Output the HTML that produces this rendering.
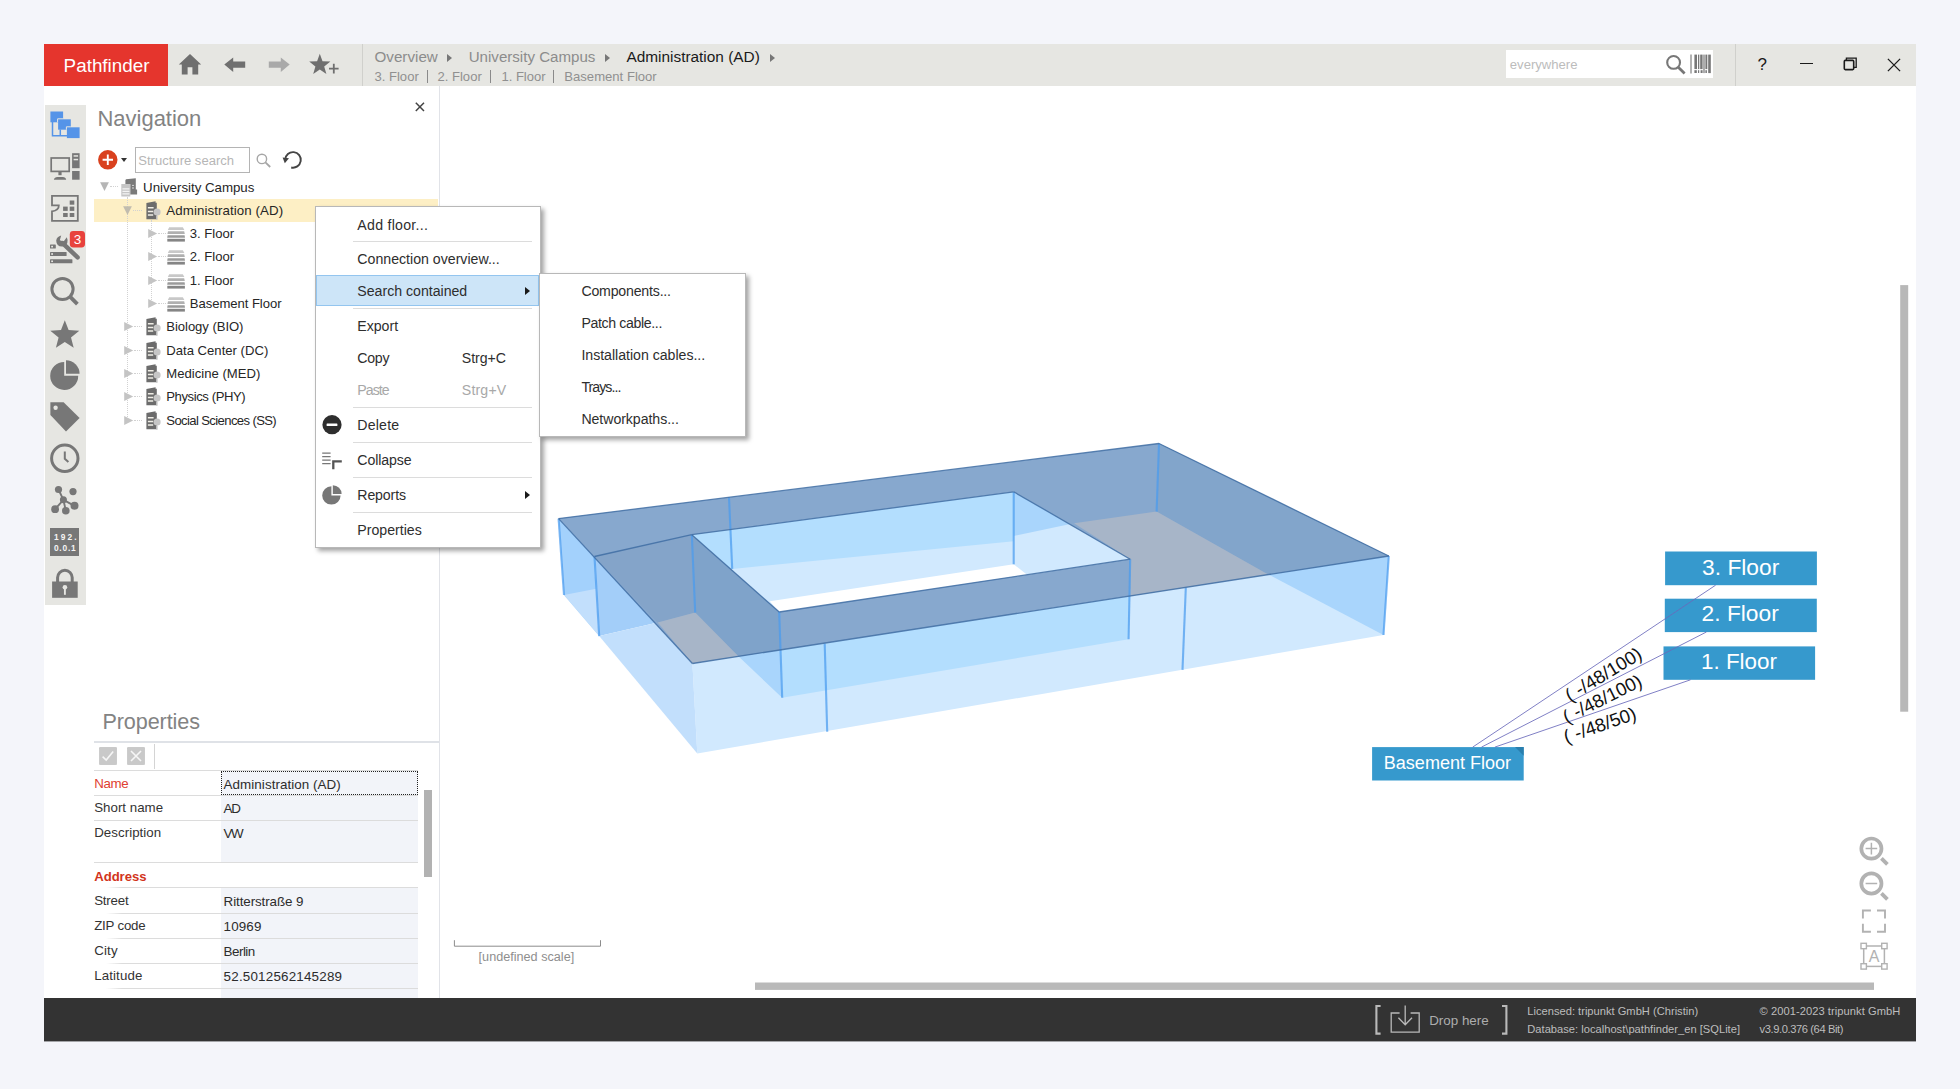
<!DOCTYPE html>
<html>
<head>
<meta charset="utf-8">
<title>Pathfinder</title>
<style>
*{box-sizing:border-box;margin:0;padding:0}
html,body{width:1960px;height:1089px;overflow:hidden;background:#f4f5fa;font-family:"Liberation Sans",sans-serif;}
.abs{position:absolute}
#win{position:absolute;left:44px;top:44px;width:1872px;height:998px;background:#fff;overflow:hidden}
.t{position:absolute;white-space:nowrap;line-height:1}
</style>
</head>
<body>
<div id="win">
<!-- title -->
<div class="abs" style="left:0.0px;top:0.0px;width:1872.0px;height:41.7px;background:#e6e6e2;"></div>
<div class="abs" style="left:0.0px;top:0.0px;width:124.2px;height:41.7px;background:#e5352d;"></div>
<div class="t" style="left:19.6px;top:13px;font-size:18.85px;color:#fff;">Pathfinder</div>
<div class="abs" style="left:318.0px;top:0.0px;width:1.0px;height:41.7px;background:#d0d0cc;"></div>
<div class="abs" style="left:1691.0px;top:0.0px;width:1.0px;height:41.7px;background:#d0d0cc;"></div>
<svg class="abs" style="left:134.0px;top:9.0px" width="24" height="23" viewBox="0 0 24 23"><path d="M12 1 L0.8 11.6 L3.8 11.6 L3.8 21.6 L9.6 21.6 L9.6 14.2 L14.4 14.2 L14.4 21.6 L20.2 21.6 L20.2 11.6 L23.2 11.6 Z" fill="#6f6f6f"/></svg>
<svg class="abs" style="left:180.0px;top:13.0px" width="22" height="16" viewBox="0 0 22 16"><path d="M0.3 7.6 L9.2 0.4 L9.2 4.6 L21.2 4.6 L21.2 10.8 L9.2 10.8 L9.2 15 Z" fill="#6f6f6f"/></svg>
<svg class="abs" style="left:224.0px;top:13.0px" width="22" height="16" viewBox="0 0 22 16"><path d="M21.7 7.6 L12.8 0.4 L12.8 4.6 L0.8 4.6 L0.8 10.8 L12.8 10.8 L12.8 15 Z" fill="#a9a9a9"/></svg>
<svg class="abs" style="left:265.0px;top:9.0px" width="32" height="23" viewBox="0 0 32 23"><path d="M10.8 0.8 L13.5 8.2 L21.4 8.5 L15.2 13.4 L17.4 21 L10.8 16.6 L4.2 21 L6.4 13.4 L0.2 8.5 L8.1 8.2 Z" fill="#6f6f6f"/><path d="M20 15.6 H29.6 M24.8 10.8 V20.4" stroke="#6f6f6f" stroke-width="1.8" fill="none"/></svg>
<div class="t" style="left:330.5px;top:5px;font-size:15.2px;color:#8c8c8c;">Overview</div>
<div class="abs" style="left:403px;top:9.8px;border-left:5.5px solid #777;border-top:4.5px solid transparent;border-bottom:4.5px solid transparent"></div>
<div class="t" style="left:424.7px;top:5px;font-size:15.1px;color:#8c8c8c;">University Campus</div>
<div class="abs" style="left:560.6px;top:9.8px;border-left:5.5px solid #777;border-top:4.5px solid transparent;border-bottom:4.5px solid transparent"></div>
<div class="t" style="left:582.4px;top:5px;font-size:15.4px;color:#1a1a1a;">Administration (AD)</div>
<div class="abs" style="left:725.6px;top:9.8px;border-left:5.5px solid #777;border-top:4.5px solid transparent;border-bottom:4.5px solid transparent"></div>
<div class="t" style="left:330.5px;top:26px;font-size:13.05px;color:#909090;">3. Floor</div>
<div class="abs" style="left:382.7px;top:25.6px;width:1.0px;height:13.0px;background:#8a8a8a;"></div>
<div class="t" style="left:393.5px;top:26px;font-size:13.05px;color:#909090;">2. Floor</div>
<div class="abs" style="left:446.3px;top:25.6px;width:1.0px;height:13.0px;background:#8a8a8a;"></div>
<div class="t" style="left:457.4px;top:26px;font-size:13.05px;color:#909090;">1. Floor</div>
<div class="abs" style="left:509.3px;top:25.6px;width:1.0px;height:13.0px;background:#8a8a8a;"></div>
<div class="t" style="left:520.3px;top:26px;font-size:13.1px;color:#909090;">Basement Floor</div>
<div class="abs" style="left:1461.6px;top:6.0px;width:207.4px;height:28.2px;background:#fff;"></div>
<div class="t" style="left:1465.8px;top:14px;font-size:13.1px;color:#bcbcbc;">everywhere</div>
<svg class="abs" style="left:1621.0px;top:10.0px" width="22" height="21" viewBox="0 0 22 21"><circle cx="8.6" cy="8.4" r="6.4" fill="none" stroke="#777" stroke-width="2.1"/><path d="M13.3 13.3 L19.6 19.4" stroke="#777" stroke-width="2.8" fill="none"/></svg>
<svg class="abs" style="left:1646.0px;top:9.5px" width="23" height="20" viewBox="0 0 23 20"><path d="M1 0.5V19.5" stroke="#555" stroke-width="0.9"/><g fill="#777"><rect x="4.4" y="0.6" width="2.6" height="14.5"/><rect x="8" y="0.6" width="1.3" height="14.5"/><rect x="10.2" y="0.6" width="2.4" height="14.5"/><rect x="13.4" y="0.6" width="1.2" height="18.5"/><rect x="15.4" y="0.6" width="1.9" height="14.5"/><rect x="18.2" y="0.6" width="2.6" height="18.5"/><rect x="4.4" y="16.2" width="2.4" height="2.8"/><rect x="8" y="16.2" width="1.2" height="2.8"/><rect x="10.6" y="16.2" width="2" height="2.8"/><rect x="15.4" y="16.2" width="1.5" height="2.8"/></g></svg>
<div class="t" style="left:1713.5px;top:12px;font-size:17.0px;color:#1a1a1a;">?</div>
<div class="abs" style="left:1755.8px;top:19.0px;width:13.5px;height:1.2px;background:#1a1a1a;"></div>
<svg class="abs" style="left:1799.0px;top:13.0px" width="15" height="14" viewBox="0 0 15 14"><path d="M3.4 3.2 V1.2 H13.2 V10.4 H11" fill="none" stroke="#1a1a1a" stroke-width="1.3"/><rect x="1.3" y="3.4" width="9.4" height="9.2" rx="1" fill="none" stroke="#1a1a1a" stroke-width="1.6"/></svg>
<svg class="abs" style="left:1843.0px;top:13.5px" width="14" height="14" viewBox="0 0 14 14"><path d="M0.9 0.9 L13.1 13.1 M13.1 0.9 L0.9 13.1" stroke="#1a1a1a" stroke-width="1.3" fill="none"/></svg>
<!-- strip -->
<div class="abs" style="left:0.6px;top:60.6px;width:41.2px;height:500.0px;background:#e6e6e2;"></div>
<svg class="abs" style="left:6.0px;top:67.0px" width="30" height="28" viewBox="0 0 30 28"><g fill="#5594e8"><rect x="0.4" y="0.5" width="12.7" height="10.8"/><path d="M8.1 8.3 H20.8 V18.7 H8.1 Z"/><rect x="16.9" y="16.3" width="12.7" height="10.8"/></g><path d="M2.5 11 V24.8 H17 M10.3 18.5 V24.8" fill="none" stroke="#5594e8" stroke-width="1.5"/><path d="M7.6 11.3 V7.8 H13.1" fill="none" stroke="#e6e6e2" stroke-width="1"/><path d="M16.4 18.7 V15.8 H20.8" fill="none" stroke="#e6e6e2" stroke-width="1"/></svg>
<svg class="abs" style="left:6.0px;top:109.0px" width="30" height="27" viewBox="0 0 30 27"><rect x="1.2" y="5" width="18" height="13.4" fill="none" stroke="#777" stroke-width="1.7"/><rect x="8.4" y="19" width="3.2" height="3.2" fill="#777"/><path d="M3.8 26.7 Q4.6 23.9 7.4 23.9 H12.8 Q15.6 23.9 16.2 26.7 Z" fill="#777"/><rect x="22.1" y="0.2" width="7.5" height="15" fill="#777"/><rect x="23.6" y="2.2" width="4.5" height="1.5" fill="#e6e6e2"/><rect x="23.6" y="5.8" width="4.5" height="1.5" fill="#e6e6e2"/><rect x="22.1" y="18" width="7.5" height="8.7" fill="#777"/></svg>
<svg class="abs" style="left:6.0px;top:150.0px" width="30" height="29" viewBox="0 0 30 29"><path d="M2 11.4 V1.9 H27.8 V26.8 H2 V17.4 Q9 16.4 8.8 11.4 Z" fill="none" stroke="#777" stroke-width="1.8"/><g fill="#777"><rect x="19.7" y="6.5" width="4.6" height="4.2"/><rect x="13.1" y="12.6" width="4.6" height="4.3"/><rect x="19.7" y="12.6" width="4.6" height="4.3"/><rect x="13.1" y="19" width="4.6" height="4"/><rect x="19.7" y="19" width="4.6" height="4"/></g></svg>
<svg class="abs" style="left:5.0px;top:186.0px" width="38" height="35" viewBox="0 0 38 35"><g fill="#777"><rect x="1" y="14.4" width="5.8" height="4.2" rx="0.6"/><rect x="1" y="22" width="16.6" height="4.1" rx="0.6"/><rect x="1" y="29.2" width="22.4" height="4.1" rx="0.6"/></g><g fill="#e6e6e2"><rect x="2.2" y="15.8" width="1.8" height="1.6"/><rect x="2.2" y="23.2" width="1.8" height="1.6"/><rect x="2.2" y="30.5" width="1.8" height="1.6"/></g><path d="M13.6 13.2 L28.6 27.4" stroke="#777" stroke-width="4.4" stroke-linecap="round"/><path d="M7.2 10.4 Q7.4 16.6 13.4 16.4 Q18.8 15.8 18.6 10 L17.8 7.2 L14.6 11.6 L10.8 10.2 L12.2 5.6 Q8 6.6 7.2 10.4 Z" fill="#777"/><rect x="20.8" y="1" width="15.2" height="16.4" rx="3.4" fill="#e8423d"/><text x="28.4" y="14" font-family="Liberation Sans" font-size="13.5" fill="#fff" text-anchor="middle">3</text></svg>
<svg class="abs" style="left:6.0px;top:232.0px" width="30" height="30" viewBox="0 0 30 30"><circle cx="12.5" cy="13" r="10.6" fill="none" stroke="#777" stroke-width="3"/><path d="M20 20.6 L27.4 28.2" stroke="#777" stroke-width="3.8" stroke-linecap="butt"/></svg>
<svg class="abs" style="left:6.0px;top:276.0px" width="30" height="28" viewBox="0 0 30 28"><polygon points="14.8,0.2 18.6,10.1 29.3,10.7 21.0,17.4 23.7,27.7 14.8,21.9 5.9,27.7 8.6,17.4 0.3,10.7 11.0,10.1" fill="#777"/></svg>
<svg class="abs" style="left:5.0px;top:316.0px" width="32" height="31" viewBox="0 0 32 31"><path d="M15.2 15.7 V1.9 A14 14 0 1 0 29.2 15.7 Z" fill="#777"/><path d="M17 13.8 V0.3 A13.6 13.6 0 0 1 30.6 13.8 Z" fill="#777"/></svg>
<svg class="abs" style="left:6.0px;top:357.0px" width="31" height="32" viewBox="0 0 31 32"><path d="M0.4 1.3 H13.6 L29.6 17.1 L16 30.5 L0.4 14 Z" fill="#777"/><circle cx="5.6" cy="6.8" r="2.2" fill="#e6e6e2"/></svg>
<svg class="abs" style="left:5.0px;top:399.0px" width="32" height="32" viewBox="0 0 32 32"><circle cx="15.8" cy="15.3" r="13.2" fill="none" stroke="#777" stroke-width="3"/><path d="M15.8 8.4 V15.8 L19.4 19" fill="none" stroke="#777" stroke-width="2"/></svg>
<svg class="abs" style="left:6.0px;top:441.0px" width="30" height="30" viewBox="0 0 30 30"><g stroke="#777" stroke-width="1.9"><path d="M13.4 14.8 L8.5 4.5 M13.4 14.8 L24.5 20.8 M13.4 14.8 L15.8 25.7 M13.4 14.8 L5.1 24.2"/></g><g fill="#777"><circle cx="13.4" cy="14.8" r="3.5"/><circle cx="8.5" cy="4.5" r="3.6"/><circle cx="23" cy="6.6" r="3.6"/><circle cx="24.5" cy="20.8" r="4"/><circle cx="15.8" cy="25.7" r="3.8"/><circle cx="5.1" cy="24.2" r="3.9"/></g></svg>
<div class="abs" style="left:6.3px;top:483.6px;width:29.2px;height:28.8px;background:#777;"></div>
<div class="t" style="left:9.9px;top:489px;font-size:8.4px;color:#f4f4f4;font-weight:bold;letter-spacing:2.1px">192.</div>
<div class="t" style="left:9.9px;top:500px;font-size:8.4px;color:#f4f4f4;font-weight:bold;letter-spacing:0.8px">0.0.1</div>
<svg class="abs" style="left:6.0px;top:523.0px" width="30" height="32" viewBox="0 0 30 32"><path d="M7.6 15 V10.6 A7.3 7.3 0 0 1 22.2 10.6 V15" fill="none" stroke="#777" stroke-width="3"/><rect x="2.1" y="14.5" width="25.6" height="16.3" fill="#777"/><circle cx="14.9" cy="20.3" r="2.3" fill="#e6e6e2"/><path d="M14.9 21 V27.8" stroke="#e6e6e2" stroke-width="1.9"/></svg>
<!-- nav -->
<div class="abs" style="left:395.0px;top:41.7px;width:1.0px;height:912.5px;background:#e1e3e8;"></div>
<div class="t" style="left:53.4px;top:64px;font-size:22.0px;color:#838383;">Navigation</div>
<svg class="abs" style="left:371.0px;top:57.5px" width="10" height="10" viewBox="0 0 10 10"><path d="M0.8 0.8 L9 9 M9 0.8 L0.8 9" stroke="#444" stroke-width="1.5"/></svg>
<svg class="abs" style="left:54.0px;top:106.0px" width="20" height="20" viewBox="0 0 20 20"><circle cx="9.8" cy="9.8" r="9.7" fill="#d9411e"/><path d="M4.6 9.8 H15 M9.8 4.6 V15" stroke="#fff" stroke-width="1.9"/></svg>
<div class="abs" style="left:77.4px;top:113.80000000000001px;border-top:4.2px solid #333;border-left:3.5px solid transparent;border-right:3.5px solid transparent"></div>
<div class="abs" style="left:91.2px;top:103.3px;width:114.8px;height:25.3px;background:#fff;border:1px solid #b4b4b4"></div>
<div class="t" style="left:94.3px;top:110px;font-size:13.05px;color:#b6b6b6;">Structure search</div>
<svg class="abs" style="left:212.0px;top:108.5px" width="16" height="15" viewBox="0 0 16 15"><circle cx="5.9" cy="5.9" r="4.7" fill="none" stroke="#a6a6a6" stroke-width="1.4"/><path d="M9.4 9.4 L14.2 14" stroke="#a6a6a6" stroke-width="1.8"/></svg>
<svg class="abs" style="left:238.0px;top:106.0px" width="21" height="20" viewBox="0 0 21 20"><path d="M3.2 9.6 A7.8 7.8 0 1 1 9.2 17.5" fill="none" stroke="#444" stroke-width="1.9"/><path d="M0.6 7.4 L7 8.2 L2.8 13.2 Z" fill="#444"/></svg>
<div class="abs" style="left:50.2px;top:154.8px;width:344.1px;height:22.9px;background:#fdefc5;"></div>
<div class="abs" style="left:83.2px;top:153px;width:0;height:224px;border-left:1px dotted #d2d2d2"></div>
<div class="abs" style="left:107px;top:176px;width:0;height:84px;border-left:1px dotted #d2d2d2"></div>
<svg class="abs" style="left:55.9px;top:138.3px" width="10" height="10" viewBox="0 0 10 10"><polygon points="0.1,0.2 8.9,0.2 4.5,8.9" fill="#b6b6b6"/></svg>
<div class="abs" style="left:65.5px;top:142.4px;width:8px;height:0;border-top:1px dotted #d2d2d2"></div>
<svg class="abs" style="left:77.0px;top:134.0px" width="17" height="19" viewBox="0 0 17 19"><path d="M4.4 2.2 L5 1.2 L14.8 0.2 V11.4 H16.1 V16.6 H9.2 V6 H4.4 Z" fill="#7a7a7a"/><path d="M11 7.4H13M11 10H13" stroke="#d8d8d8" stroke-width="1"/><rect x="0.3" y="6" width="9" height="12.5" fill="#c6c6c6"/><path d="M1.4 10.9H8.4M1.4 13.4H8.4M1.4 15.9H8.4" stroke="#f4f4f4" stroke-width="1.4"/></svg>
<div class="t" style="left:99.1px;top:137px;font-size:13.3px;color:#262626;letter-spacing:-0.019px;">University Campus</div>
<svg class="abs" style="left:79.2px;top:161.7px" width="10" height="10" viewBox="0 0 10 10"><polygon points="0.1,0.2 8.9,0.2 4.5,8.9" fill="#c1bcae"/></svg>
<div class="abs" style="left:89.0px;top:165.6px;width:9px;height:0;border-top:1px dotted #d2d2d2"></div>
<svg class="abs" style="left:101.6px;top:157.0px" width="16" height="19" viewBox="0 0 16 19"><path d="M0.4 2 L9.6 0.3 V1.7 H10.8 V18.3 H0.4 Z" fill="#6c6c6c"/><path d="M1.9 6.65H7.6M1.9 10.4H7.2M1.9 14.05H7.2" stroke="#f0eee6" stroke-width="1.5"/><circle cx="11.1" cy="11" r="3.55" fill="#c6c6c6"/><path d="M10.9 14.4V18.7" stroke="#c6c6c6" stroke-width="1.5"/></svg>
<div class="t" style="left:122.3px;top:160px;font-size:13.3px;color:#262626;letter-spacing:0.083px;">Administration (AD)</div>
<svg class="abs" style="left:103.9px;top:184.8px" width="10" height="10" viewBox="0 0 10 10"><polygon points="0.2,0.1 9.2,4.5 0.2,8.9" fill="#c4c4c4"/></svg>
<div class="abs" style="left:113.6px;top:188.9px;width:8px;height:0;border-top:1px dotted #d2d2d2"></div>
<svg class="abs" style="left:122.9px;top:182.6px" width="19" height="15" viewBox="0 0 19 15"><path d="M2.2 0.3 H15.8 L17.4 3 H0.8 Z" fill="#c8c8c8"/><path d="M1 4.3 H17.2 L17.8 6.9 H0.4 Z" fill="#b0b0b0"/><path d="M0.6 8.2 H17.6 L18 10.7 H0.2 Z" fill="#9a9a9a"/><path d="M0.3 11.8 H17.9 V14.6 H0.3 Z" fill="#858585"/></svg>
<div class="t" style="left:145.8px;top:183px;font-size:13.1px;color:#262626;letter-spacing:-0.016px;">3. Floor</div>
<svg class="abs" style="left:103.9px;top:207.8px" width="10" height="10" viewBox="0 0 10 10"><polygon points="0.2,0.1 9.2,4.5 0.2,8.9" fill="#c4c4c4"/></svg>
<div class="abs" style="left:113.6px;top:211.9px;width:8px;height:0;border-top:1px dotted #d2d2d2"></div>
<svg class="abs" style="left:122.9px;top:205.6px" width="19" height="15" viewBox="0 0 19 15"><path d="M2.2 0.3 H15.8 L17.4 3 H0.8 Z" fill="#c8c8c8"/><path d="M1 4.3 H17.2 L17.8 6.9 H0.4 Z" fill="#b0b0b0"/><path d="M0.6 8.2 H17.6 L18 10.7 H0.2 Z" fill="#9a9a9a"/><path d="M0.3 11.8 H17.9 V14.6 H0.3 Z" fill="#858585"/></svg>
<div class="t" style="left:145.8px;top:206px;font-size:13.1px;color:#262626;letter-spacing:-0.016px;">2. Floor</div>
<svg class="abs" style="left:103.9px;top:231.8px" width="10" height="10" viewBox="0 0 10 10"><polygon points="0.2,0.1 9.2,4.5 0.2,8.9" fill="#c4c4c4"/></svg>
<div class="abs" style="left:113.6px;top:235.9px;width:8px;height:0;border-top:1px dotted #d2d2d2"></div>
<svg class="abs" style="left:122.9px;top:229.6px" width="19" height="15" viewBox="0 0 19 15"><path d="M2.2 0.3 H15.8 L17.4 3 H0.8 Z" fill="#c8c8c8"/><path d="M1 4.3 H17.2 L17.8 6.9 H0.4 Z" fill="#b0b0b0"/><path d="M0.6 8.2 H17.6 L18 10.7 H0.2 Z" fill="#9a9a9a"/><path d="M0.3 11.8 H17.9 V14.6 H0.3 Z" fill="#858585"/></svg>
<div class="t" style="left:145.8px;top:230px;font-size:13.1px;color:#262626;letter-spacing:-0.059px;">1. Floor</div>
<svg class="abs" style="left:103.9px;top:254.8px" width="10" height="10" viewBox="0 0 10 10"><polygon points="0.2,0.1 9.2,4.5 0.2,8.9" fill="#c4c4c4"/></svg>
<div class="abs" style="left:113.6px;top:258.9px;width:8px;height:0;border-top:1px dotted #d2d2d2"></div>
<svg class="abs" style="left:122.9px;top:252.6px" width="19" height="15" viewBox="0 0 19 15"><path d="M2.2 0.3 H15.8 L17.4 3 H0.8 Z" fill="#c8c8c8"/><path d="M1 4.3 H17.2 L17.8 6.9 H0.4 Z" fill="#b0b0b0"/><path d="M0.6 8.2 H17.6 L18 10.7 H0.2 Z" fill="#9a9a9a"/><path d="M0.3 11.8 H17.9 V14.6 H0.3 Z" fill="#858585"/></svg>
<div class="t" style="left:145.8px;top:253px;font-size:13.1px;color:#262626;letter-spacing:-0.052px;">Basement Floor</div>
<svg class="abs" style="left:80.3px;top:277.8px" width="10" height="10" viewBox="0 0 10 10"><polygon points="0.2,0.1 9.2,4.5 0.2,8.9" fill="#c4c4c4"/></svg>
<div class="abs" style="left:90.0px;top:281.9px;width:8px;height:0;border-top:1px dotted #d2d2d2"></div>
<svg class="abs" style="left:101.6px;top:273.0px" width="16" height="19" viewBox="0 0 16 19"><path d="M0.4 2 L9.6 0.3 V1.7 H10.8 V18.3 H0.4 Z" fill="#6c6c6c"/><path d="M1.9 6.65H7.6M1.9 10.4H7.2M1.9 14.05H7.2" stroke="#f0eee6" stroke-width="1.5"/><circle cx="11.1" cy="11" r="3.55" fill="#c6c6c6"/><path d="M10.9 14.4V18.7" stroke="#c6c6c6" stroke-width="1.5"/></svg>
<div class="t" style="left:122.3px;top:276px;font-size:13.1px;color:#262626;letter-spacing:-0.058px;">Biology (BIO)</div>
<svg class="abs" style="left:80.3px;top:301.8px" width="10" height="10" viewBox="0 0 10 10"><polygon points="0.2,0.1 9.2,4.5 0.2,8.9" fill="#c4c4c4"/></svg>
<div class="abs" style="left:90.0px;top:305.9px;width:8px;height:0;border-top:1px dotted #d2d2d2"></div>
<svg class="abs" style="left:101.6px;top:297.0px" width="16" height="19" viewBox="0 0 16 19"><path d="M0.4 2 L9.6 0.3 V1.7 H10.8 V18.3 H0.4 Z" fill="#6c6c6c"/><path d="M1.9 6.65H7.6M1.9 10.4H7.2M1.9 14.05H7.2" stroke="#f0eee6" stroke-width="1.5"/><circle cx="11.1" cy="11" r="3.55" fill="#c6c6c6"/><path d="M10.9 14.4V18.7" stroke="#c6c6c6" stroke-width="1.5"/></svg>
<div class="t" style="left:122.3px;top:300px;font-size:13.1px;color:#262626;letter-spacing:0.005px;">Data Center (DC)</div>
<svg class="abs" style="left:80.3px;top:324.8px" width="10" height="10" viewBox="0 0 10 10"><polygon points="0.2,0.1 9.2,4.5 0.2,8.9" fill="#c4c4c4"/></svg>
<div class="abs" style="left:90.0px;top:328.9px;width:8px;height:0;border-top:1px dotted #d2d2d2"></div>
<svg class="abs" style="left:101.6px;top:320.0px" width="16" height="19" viewBox="0 0 16 19"><path d="M0.4 2 L9.6 0.3 V1.7 H10.8 V18.3 H0.4 Z" fill="#6c6c6c"/><path d="M1.9 6.65H7.6M1.9 10.4H7.2M1.9 14.05H7.2" stroke="#f0eee6" stroke-width="1.5"/><circle cx="11.1" cy="11" r="3.55" fill="#c6c6c6"/><path d="M10.9 14.4V18.7" stroke="#c6c6c6" stroke-width="1.5"/></svg>
<div class="t" style="left:122.3px;top:323px;font-size:13.1px;color:#262626;letter-spacing:0.007px;">Medicine (MED)</div>
<svg class="abs" style="left:80.3px;top:347.8px" width="10" height="10" viewBox="0 0 10 10"><polygon points="0.2,0.1 9.2,4.5 0.2,8.9" fill="#c4c4c4"/></svg>
<div class="abs" style="left:90.0px;top:351.9px;width:8px;height:0;border-top:1px dotted #d2d2d2"></div>
<svg class="abs" style="left:101.6px;top:343.0px" width="16" height="19" viewBox="0 0 16 19"><path d="M0.4 2 L9.6 0.3 V1.7 H10.8 V18.3 H0.4 Z" fill="#6c6c6c"/><path d="M1.9 6.65H7.6M1.9 10.4H7.2M1.9 14.05H7.2" stroke="#f0eee6" stroke-width="1.5"/><circle cx="11.1" cy="11" r="3.55" fill="#c6c6c6"/><path d="M10.9 14.4V18.7" stroke="#c6c6c6" stroke-width="1.5"/></svg>
<div class="t" style="left:122.3px;top:346px;font-size:13.1px;color:#262626;letter-spacing:-0.420px;">Physics (PHY)</div>
<svg class="abs" style="left:80.3px;top:371.8px" width="10" height="10" viewBox="0 0 10 10"><polygon points="0.2,0.1 9.2,4.5 0.2,8.9" fill="#c4c4c4"/></svg>
<div class="abs" style="left:90.0px;top:375.9px;width:8px;height:0;border-top:1px dotted #d2d2d2"></div>
<svg class="abs" style="left:101.6px;top:367.0px" width="16" height="19" viewBox="0 0 16 19"><path d="M0.4 2 L9.6 0.3 V1.7 H10.8 V18.3 H0.4 Z" fill="#6c6c6c"/><path d="M1.9 6.65H7.6M1.9 10.4H7.2M1.9 14.05H7.2" stroke="#f0eee6" stroke-width="1.5"/><circle cx="11.1" cy="11" r="3.55" fill="#c6c6c6"/><path d="M10.9 14.4V18.7" stroke="#c6c6c6" stroke-width="1.5"/></svg>
<div class="t" style="left:122.3px;top:370px;font-size:13.1px;color:#262626;letter-spacing:-0.622px;">Social Sciences (SS)</div>
<!-- props -->
<div class="t" style="left:58.4px;top:667px;font-size:21.6px;color:#838383;letter-spacing:-0.094px;">Properties</div>
<div class="abs" style="left:50.0px;top:696.9px;width:345.0px;height:1.8px;background:#dfe2e7;"></div>
<svg class="abs" style="left:55.0px;top:703.4px" width="18" height="18" viewBox="0 0 18 18"><rect x="0.3" y="0.3" width="17.4" height="17.4" rx="1" fill="#c9c9c9" stroke="#bdbdbd" stroke-width="0.6"/><path d="M3.6 9.6 L7.2 13 L14.2 4.6" fill="none" stroke="#f6f6f6" stroke-width="1.6"/></svg>
<svg class="abs" style="left:83.2px;top:703.4px" width="18" height="18" viewBox="0 0 18 18"><rect x="0.3" y="0.3" width="17.4" height="17.4" rx="1" fill="#c9c9c9" stroke="#bdbdbd" stroke-width="0.6"/><path d="M4 4 L14 14 M14 4 L4 14" fill="none" stroke="#f6f6f6" stroke-width="1.6"/></svg>
<div class="abs" style="left:109.5px;top:700.0px;width:1.0px;height:24.5px;background:#d4d4d4;"></div>
<div class="abs" style="left:177.0px;top:727.0px;width:197.0px;height:91.8px;background:#f2f4f9;"></div>
<div class="abs" style="left:177.0px;top:844.2px;width:197.0px;height:110.0px;background:#f2f4f9;"></div>
<div class="abs" style="left:50.0px;top:726.3px;width:324.0px;height:1.0px;background:#dcdcdc;"></div>
<div class="abs" style="left:50.0px;top:751.1px;width:324.0px;height:1.0px;background:#dcdcdc;"></div>
<div class="abs" style="left:50.0px;top:775.9px;width:324.0px;height:1.0px;background:#dcdcdc;"></div>
<div class="abs" style="left:50.0px;top:818.1px;width:324.0px;height:1.0px;background:#dcdcdc;"></div>
<div class="abs" style="left:50px;top:843.4px;width:324px;height:1px;background:linear-gradient(to right,rgba(220,220,220,0) 0,rgba(220,220,220,0) 12px,#dcdcdc 28px,#dcdcdc 100%)"></div>
<div class="abs" style="left:50px;top:868.5px;width:324px;height:1px;background:linear-gradient(to right,rgba(220,220,220,0) 0,rgba(220,220,220,0) 12px,#dcdcdc 28px,#dcdcdc 100%)"></div>
<div class="abs" style="left:50px;top:893.9px;width:324px;height:1px;background:linear-gradient(to right,rgba(220,220,220,0) 0,rgba(220,220,220,0) 12px,#dcdcdc 28px,#dcdcdc 100%)"></div>
<div class="abs" style="left:50px;top:919.2px;width:324px;height:1px;background:linear-gradient(to right,rgba(220,220,220,0) 0,rgba(220,220,220,0) 12px,#dcdcdc 28px,#dcdcdc 100%)"></div>
<div class="abs" style="left:50px;top:944.3px;width:324px;height:1px;background:linear-gradient(to right,rgba(220,220,220,0) 0,rgba(220,220,220,0) 12px,#dcdcdc 28px,#dcdcdc 100%)"></div>
<div class="t" style="left:50.2px;top:733px;font-size:13.3px;color:#e04030;letter-spacing:-0.360px;">Name</div>
<div class="t" style="left:179.6px;top:734px;font-size:13.4px;color:#2c2c2c;letter-spacing:0.063px;">Administration (AD)</div>
<div class="t" style="left:50.2px;top:757px;font-size:13.3px;color:#333;letter-spacing:0.016px;">Short name</div>
<div class="t" style="left:179.6px;top:758px;font-size:13.4px;color:#2c2c2c;letter-spacing:-1.216px;">AD</div>
<div class="t" style="left:50.2px;top:782px;font-size:13.3px;color:#333;letter-spacing:0.047px;">Description</div>
<div class="t" style="left:179.6px;top:783px;font-size:13.4px;color:#2c2c2c;letter-spacing:-1.486px;">VW</div>
<div class="t" style="left:50.2px;top:850px;font-size:13.3px;color:#333;letter-spacing:-0.217px;">Street</div>
<div class="t" style="left:179.6px;top:851px;font-size:13.4px;color:#2c2c2c;letter-spacing:-0.097px;">Ritterstraße 9</div>
<div class="t" style="left:50.2px;top:875px;font-size:13.3px;color:#333;letter-spacing:-0.212px;">ZIP code</div>
<div class="t" style="left:179.6px;top:876px;font-size:13.4px;color:#2c2c2c;letter-spacing:0.134px;">10969</div>
<div class="t" style="left:50.2px;top:900px;font-size:13.3px;color:#333;letter-spacing:0.165px;">City</div>
<div class="t" style="left:179.6px;top:901px;font-size:13.4px;color:#2c2c2c;letter-spacing:-0.512px;">Berlin</div>
<div class="t" style="left:50.2px;top:925px;font-size:13.3px;color:#333;letter-spacing:0.124px;">Latitude</div>
<div class="t" style="left:179.6px;top:926px;font-size:13.4px;color:#2c2c2c;letter-spacing:0.199px;">52.5012562145289</div>
<div class="t" style="left:50.2px;top:826px;font-size:13.15px;color:#d2341c;letter-spacing:-0.037px;;font-weight:bold">Address</div>
<div class="abs" style="left:176.8px;top:727.0px;width:197.3px;height:24.3px;background:transparent;border:1px dotted #222"></div>
<div class="abs" style="left:380.0px;top:746.4px;width:7.8px;height:86.8px;background:#b2b2b2;"></div>
<!-- canvas -->
<svg class="abs" style="left:0;top:0" width="1872" height="997" viewBox="0 0 1872 997">
<polygon points="648.4,619.5 1344.8,512.0 1339.5,591.0 653.3,709.4" fill="#d1e9fe" />
<polygon points="514.6,474.6 550.5,512.5 555.2,592.1 520.0,551.0" fill="#a3d1fc" />
<polygon points="520.0,551.0 552.1,544.8 555.2,592.1" fill="#c2dffc" />
<polygon points="550.5,512.5 613.7,578.4 555.2,592.1" fill="#a3cef9" />
<polygon points="555.2,592.1 613.7,578.4 648.4,619.5 653.3,709.4" fill="#c2dffc" />
<polygon points="694.4,612.3 736.4,605.9 738.2,653.8" fill="#a9d5fc" />
<polygon points="736.4,605.9 1086.2,551.9 1084.6,595.3 738.2,653.8" fill="#b3defe" />
<polygon points="1224.2,530.4 1344.8,512.0 1339.5,591.0" fill="#a9d5fc" />
<polygon points="647.8,490.7 969.7,447.8 1086.2,515.2 735.2,568.0" fill="#d1e9fe" />
<polygon points="647.8,490.7 969.7,447.8 969.7,497.3 688.2,524.9 686.8,525.2" fill="#b3defe" />
<polygon points="969.7,447.8 1030.0,479.2 969.7,492.0" fill="#a9d5fc" />
<polygon points="725.8,557.2 969.7,520.3 983.4,531.0 735.2,568.0" fill="#ffffff" />
<path d="M514.6,474.6 1115.0,399.5 1344.8,512.0 648.4,619.5Z M647.8,490.7 735.2,568.0 1086.2,515.2 969.7,447.8Z" fill="#87a8ce" fill-rule="evenodd"/>
<polygon points="550.5,512.5 647.8,490.7 651.2,568.6 613.7,578.4" fill="#84a4c9" />
<polygon points="647.8,490.7 735.2,568.0 736.4,605.9 694.4,612.3 651.2,568.6" fill="#7fa3ca" />
<polygon points="1115.0,399.5 1344.8,512.0 1224.2,530.4 1112.6,467.6" fill="#82a5cb" />
<polygon points="613.7,578.4 651.2,568.6 694.4,612.3 648.4,619.5" fill="#a7b5c8" />
<polygon points="1030.0,479.2 1112.6,467.6 1224.2,530.4 1086.2,551.9 1086.2,515.2" fill="#a7b5c8" />
<line x1="514.6" y1="474.6" x2="520.0" y2="551.0" stroke="#4a9bee" stroke-width="2.1" stroke-opacity="0.72"/>
<line x1="550.5" y1="512.5" x2="555.2" y2="592.1" stroke="#4a9bee" stroke-width="2.1" stroke-opacity="0.72"/>
<line x1="647.8" y1="490.7" x2="651.2" y2="568.6" stroke="#4a9bee" stroke-width="2.1" stroke-opacity="0.72"/>
<line x1="685.0" y1="453.3" x2="688.2" y2="524.9" stroke="#4a9bee" stroke-width="2.1" stroke-opacity="0.72"/>
<line x1="969.7" y1="447.8" x2="969.7" y2="520.3" stroke="#4a9bee" stroke-width="2.1" stroke-opacity="0.72"/>
<line x1="735.2" y1="568.0" x2="738.2" y2="653.8" stroke="#4a9bee" stroke-width="2.1" stroke-opacity="0.72"/>
<line x1="1086.2" y1="515.2" x2="1084.6" y2="595.3" stroke="#4a9bee" stroke-width="2.1" stroke-opacity="0.72"/>
<line x1="780.7" y1="599.6" x2="783.2" y2="687.7" stroke="#4a9bee" stroke-width="2.1" stroke-opacity="0.72"/>
<line x1="1141.8" y1="544.0" x2="1138.5" y2="625.9" stroke="#4a9bee" stroke-width="2.1" stroke-opacity="0.72"/>
<line x1="1115.0" y1="399.5" x2="1112.6" y2="467.6" stroke="#4a9bee" stroke-width="2.1" stroke-opacity="0.72"/>
<line x1="1344.8" y1="512.0" x2="1339.5" y2="591.0" stroke="#4a9bee" stroke-width="2.1" stroke-opacity="0.72"/>
<line x1="514.6" y1="474.6" x2="1115.0" y2="399.5" stroke="#3f6da3" stroke-width="1.3" stroke-opacity="0.85"/>
<line x1="1115.0" y1="399.5" x2="1344.8" y2="512.0" stroke="#3f6da3" stroke-width="1.3" stroke-opacity="0.85"/>
<line x1="1344.8" y1="512.0" x2="648.4" y2="619.5" stroke="#3f6da3" stroke-width="1.3" stroke-opacity="0.85"/>
<line x1="648.4" y1="619.5" x2="514.6" y2="474.6" stroke="#3f6da3" stroke-width="1.3" stroke-opacity="0.85"/>
<line x1="647.8" y1="490.7" x2="969.7" y2="447.8" stroke="#3f6da3" stroke-width="1.3" stroke-opacity="0.85"/>
<line x1="969.7" y1="447.8" x2="1086.2" y2="515.2" stroke="#3f6da3" stroke-width="1.3" stroke-opacity="0.85"/>
<line x1="1086.2" y1="515.2" x2="735.2" y2="568.0" stroke="#3f6da3" stroke-width="1.3" stroke-opacity="0.85"/>
<line x1="735.2" y1="568.0" x2="647.8" y2="490.7" stroke="#3f6da3" stroke-width="1.3" stroke-opacity="0.85"/>
<line x1="550.5" y1="512.5" x2="647.8" y2="490.7" stroke="#3f6da3" stroke-width="1.3" stroke-opacity="0.85"/>
<rect x="1621.1" y="507.5" width="151.8" height="33.7" fill="#3699cd"/>
<rect x="1620.8" y="554.7" width="152.0" height="33.4" fill="#3699cd"/>
<rect x="1619.5" y="602.4" width="151.6" height="33.4" fill="#3699cd"/>
<rect x="1328.1" y="703.1" width="151.6" height="33.4" fill="#3699cd"/>
<polygon points="1471.0,703.1 1479.7,703.1 1479.7,711.8" fill="#2a7fae" />
<line x1="1428.7" y1="703.1" x2="1671.6" y2="541.2" stroke="#6a6abb" stroke-width="1" stroke-opacity="0.85"/>
<line x1="1437.5" y1="703.1" x2="1662.4" y2="588.0" stroke="#6a6abb" stroke-width="1" stroke-opacity="0.85"/>
<line x1="1450.9" y1="703.1" x2="1646.5" y2="635.8" stroke="#6a6abb" stroke-width="1" stroke-opacity="0.85"/>
<text x="1658.1" y="530.5" font-family="Liberation Sans" font-size="22.75" fill="#fff" text-anchor="start" >3. Floor</text>
<text x="1657.6" y="577.3" font-family="Liberation Sans" font-size="22.75" fill="#fff" text-anchor="start" >2. Floor</text>
<text x="1657.0" y="624.8" font-family="Liberation Sans" font-size="22.4" fill="#fff" text-anchor="start" >1. Floor</text>
<text x="1339.8" y="725.0" font-family="Liberation Sans" font-size="18.05" fill="#fff" text-anchor="start" >Basement Floor</text>
<text transform="translate(1559.2,630.2) rotate(-31.3)" x="0" y="6.6" font-family="Liberation Sans" font-size="18.6" fill="#111" text-anchor="middle">( -/48/100)</text>
<text transform="translate(1558.2,654.6) rotate(-26.5)" x="0" y="6.6" font-family="Liberation Sans" font-size="18.6" fill="#111" text-anchor="middle">( -/48/100)</text>
<text transform="translate(1555.8,680.9) rotate(-19)" x="0" y="6.6" font-family="Liberation Sans" font-size="18.6" fill="#111" text-anchor="middle">( -/48/50)</text>
<path d="M410.4 896.2 V902.2 H556.5 V896.2" fill="none" stroke="#8c8c8c" stroke-width="1"/>
<text x="434.6" y="916.8" font-family="Liberation Sans" font-size="12.65" fill="#8e8e8e" text-anchor="start" >[undefined scale]</text>
<rect x="1856.2" y="241.1" width="8" height="426.6" fill="#b8b8b8"/>
<rect x="711" y="938.5" width="1119" height="7.4" fill="#b9b9b9"/>
<circle cx="1827.4" cy="804.6" r="10.1" fill="none" stroke="#b2b2b2" stroke-width="3.7"/><path d="M1821.6 804.6 H1833.2 M1827.4 798.8 V810.4" stroke="#b2b2b2" stroke-width="1.5" fill="none"/><path d="M1837.4 814.4 L1843.4 820.4" stroke="#b2b2b2" stroke-width="3.8"/>
<circle cx="1827.4" cy="839.5" r="10.1" fill="none" stroke="#b2b2b2" stroke-width="3.7"/><path d="M1821.6 839.5 H1833.2" stroke="#b2b2b2" stroke-width="1.5" fill="none"/><path d="M1837.4 849.3 L1843.4 855.3" stroke="#b2b2b2" stroke-width="3.8"/>
<path d="M1818.9 874.5 V866.5 H1826.9 M1833 866.5 H1841 V874.5 M1841 879.8 V887.8 H1833 M1826.9 887.8 H1818.9 V879.8" fill="none" stroke="#b2b2b2" stroke-width="1.9"/>
<rect x="1819.7" y="902" width="20.7" height="20.4" fill="none" stroke="#b2b2b2" stroke-width="1.5"/><rect x="1817.0" y="899.3" width="5.4" height="5.4" fill="#fff" stroke="#b2b2b2" stroke-width="1.4"/><rect x="1837.7" y="899.3" width="5.4" height="5.4" fill="#fff" stroke="#b2b2b2" stroke-width="1.4"/><rect x="1817.0" y="919.7" width="5.4" height="5.4" fill="#fff" stroke="#b2b2b2" stroke-width="1.4"/><rect x="1837.7" y="919.7" width="5.4" height="5.4" fill="#fff" stroke="#b2b2b2" stroke-width="1.4"/><text x="1830.1" y="917.8" font-family="Liberation Sans" font-size="16" fill="#b2b2b2" text-anchor="middle">A</text>
</svg>
<!-- menu -->
<div class="abs" style="left:271.2px;top:162.3px;width:225.9px;height:341.6px;background:#fff;border:1px solid #b8b8b8;box-shadow:2.5px 2.5px 4.5px rgba(0,0,0,0.36)"></div>
<div class="t" style="left:313.3px;top:174px;font-size:14.15px;color:#2e2e2e;letter-spacing:0.268px;">Add floor...</div>
<div class="abs" style="left:308.6px;top:197.0px;width:179.2px;height:1.0px;background:#dcdcdc;"></div>
<div class="t" style="left:313.3px;top:208px;font-size:14.15px;color:#2e2e2e;letter-spacing:0.006px;">Connection overview...</div>
<div class="abs" style="left:272.4px;top:231.3px;width:222.6px;height:31.0px;background:#cde5f8;border:1px solid #93c5ef"></div>
<div class="abs" style="left:308.6px;top:263.9px;width:179.2px;height:1.0px;background:#dcdcdc;"></div>
<div class="t" style="left:313.3px;top:240px;font-size:14.15px;color:#2e2e2e;letter-spacing:-0.009px;">Search contained</div>
<div class="abs" style="left:480.8px;top:243.2px;border-left:5.4px solid #1a1a1a;border-top:4.4px solid transparent;border-bottom:4.4px solid transparent"></div>
<div class="t" style="left:313.3px;top:275px;font-size:14.15px;color:#2e2e2e;letter-spacing:-0.019px;">Export</div>
<div class="t" style="left:313.3px;top:307px;font-size:14.15px;color:#2e2e2e;letter-spacing:-0.278px;">Copy</div>
<div class="t" style="left:417.8px;top:307px;font-size:14.15px;color:#2e2e2e;letter-spacing:-0.027px;">Strg+C</div>
<div class="t" style="left:313.3px;top:339px;font-size:14.15px;color:#a8a8a8;letter-spacing:-0.971px;">Paste</div>
<div class="t" style="left:417.8px;top:339px;font-size:14.15px;color:#a8a8a8;letter-spacing:0.169px;">Strg+V</div>
<div class="abs" style="left:308.6px;top:363.0px;width:179.2px;height:1.0px;background:#dcdcdc;"></div>
<div class="t" style="left:313.3px;top:374px;font-size:14.15px;color:#2e2e2e;letter-spacing:0.199px;">Delete</div>
<svg class="abs" style="left:278.0px;top:371.0px" width="20" height="20" viewBox="0 0 20 20"><circle cx="10" cy="9.7" r="9.6" fill="#2e2e2e"/><rect x="4.6" y="8.4" width="10.8" height="2.7" rx="0.6" fill="#fff"/></svg>
<div class="abs" style="left:308.6px;top:397.9px;width:179.2px;height:1.0px;background:#dcdcdc;"></div>
<div class="t" style="left:313.3px;top:409px;font-size:14.15px;color:#2e2e2e;letter-spacing:-0.094px;">Collapse</div>
<svg class="abs" style="left:278.0px;top:408.0px" width="20" height="18" viewBox="0 0 20 18"><path d="M0.2 1.1H8.6M0.2 4.6H8.6M0.2 8.1H8.6M0.2 11.6H8.6" stroke="#777" stroke-width="1.3"/><path d="M11.3 17.2 V9.4 H19.8" fill="none" stroke="#555" stroke-width="2.3"/></svg>
<div class="abs" style="left:308.6px;top:433.1px;width:179.2px;height:1.0px;background:#dcdcdc;"></div>
<div class="t" style="left:313.3px;top:444px;font-size:14.15px;color:#2e2e2e;letter-spacing:-0.125px;">Reports</div>
<div class="abs" style="left:480.8px;top:447.2px;border-left:5.4px solid #1a1a1a;border-top:4.4px solid transparent;border-bottom:4.4px solid transparent"></div>
<svg class="abs" style="left:278.0px;top:440.6px" width="20" height="20" viewBox="0 0 20 20"><path d="M9.4 10.4 V1.2 A9.2 9.2 0 1 0 18.6 10.4 Z" fill="#777"/><path d="M10.8 9 V0.2 A8.8 8.8 0 0 1 19.6 9 Z" fill="#777"/></svg>
<div class="abs" style="left:308.6px;top:468.1px;width:179.2px;height:1.0px;background:#dcdcdc;"></div>
<div class="t" style="left:313.3px;top:479px;font-size:14.15px;color:#2e2e2e;letter-spacing:0.001px;">Properties</div>
<div class="abs" style="left:495.4px;top:229.2px;width:206.9px;height:163.6px;background:#fff;border:1px solid #b8b8b8;box-shadow:2.5px 2.5px 4.5px rgba(0,0,0,0.36)"></div>
<div class="t" style="left:537.4px;top:240px;font-size:14.15px;color:#2e2e2e;letter-spacing:-0.194px;">Components...</div>
<div class="t" style="left:537.4px;top:272px;font-size:14.15px;color:#2e2e2e;letter-spacing:-0.364px;">Patch cable...</div>
<div class="t" style="left:537.4px;top:304px;font-size:14.15px;color:#2e2e2e;letter-spacing:-0.018px;">Installation cables...</div>
<div class="t" style="left:537.4px;top:336px;font-size:14.15px;color:#2e2e2e;letter-spacing:-0.949px;">Trays...</div>
<div class="t" style="left:537.4px;top:368px;font-size:14.15px;color:#2e2e2e;letter-spacing:-0.057px;">Networkpaths...</div>
<!-- status -->
<div class="abs" style="left:0.0px;top:954.0px;width:1872.0px;height:43.0px;background:#333;"></div>
<div class="abs" style="left:0.0px;top:997.0px;width:1872.0px;height:1.0px;background:#a3a4a7;"></div>
<svg class="abs" style="left:1331.0px;top:961.0px" width="7" height="30" viewBox="0 0 7 30"><path d="M5.6 0.9 H1.4 V28.6 H5.6" fill="none" stroke="#b9b9b9" stroke-width="2.1"/></svg>
<svg class="abs" style="left:1457.4px;top:961.0px" width="7" height="30" viewBox="0 0 7 30"><path d="M1 0.9 H5.4 V28.6 H1" fill="none" stroke="#b9b9b9" stroke-width="2.1"/></svg>
<svg class="abs" style="left:1346.0px;top:961.0px" width="31" height="29" viewBox="0 0 31 29"><path d="M9.6 8 H1.2 V27.2 H29.2 V8 H20.6" fill="none" stroke="#b9b9b9" stroke-width="1.3"/><path d="M15.2 0.4 V19.4 M8.4 12.8 L15.2 19.8 L22 12.8" fill="none" stroke="#b9b9b9" stroke-width="1.3"/></svg>
<div class="t" style="left:1385.2px;top:970px;font-size:13.4px;color:#adadad;letter-spacing:-0.011px;">Drop here</div>
<div class="t" style="left:1483.3px;top:962px;font-size:11.15px;color:#bdbdbd;letter-spacing:-0.001px;">Licensed: tripunkt GmbH (Christin)</div>
<div class="t" style="left:1483.3px;top:980px;font-size:11.15px;color:#bdbdbd;letter-spacing:0.007px;">Database: localhost\pathfinder_en [SQLite]</div>
<div class="t" style="left:1715.5px;top:962px;font-size:11.15px;color:#bdbdbd;letter-spacing:0.058px;">© 2001-2023 tripunkt GmbH</div>
<div class="t" style="left:1715.5px;top:980px;font-size:11.15px;color:#bdbdbd;letter-spacing:-0.395px;">v3.9.0.376 (64 Bit)</div>
</div>
</body>
</html>
